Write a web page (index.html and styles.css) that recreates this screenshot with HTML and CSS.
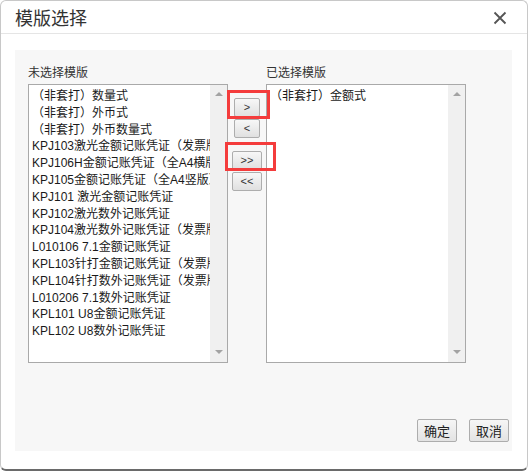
FILE: index.html
```html
<!DOCTYPE html>
<html lang="zh">
<head>
<meta charset="utf-8">
<title>模版选择</title>
<link rel="stylesheet" href="styles.css">
</head>
<body>
<div class="dialog">
  <div class="header">
    <span class="title">模版选择</span>
    <svg class="close" width="14" height="14" viewBox="0 0 14 14"><path d="M1.5 1.5 L12.5 12.5 M12.5 1.5 L1.5 12.5" stroke="#555" stroke-width="1.8" fill="none"/></svg>
  </div>
  <div class="panel">
    <div class="cols">
      <div class="col">
        <div class="label">未选择模版</div>
        <div class="listbox">
          <ul class="items">
            <li>（非套打）数量式</li>
            <li>（非套打）外币式</li>
            <li>（非套打）外币数量式</li>
            <li>KPJ103激光金额记账凭证（发票版）</li>
            <li>KPJ106H金额记账凭证（全A4横版）</li>
            <li>KPJ105金额记账凭证（全A4竖版）</li>
            <li>KPJ101 激光金额记账凭证</li>
            <li>KPJ102激光数外记账凭证</li>
            <li>KPJ104激光数外记账凭证（发票版）</li>
            <li>L010106 7.1金额记账凭证</li>
            <li>KPL103针打金额记账凭证（发票版）</li>
            <li>KPL104针打数外记账凭证（发票版）</li>
            <li>L010206 7.1数外记账凭证</li>
            <li>KPL101 U8金额记账凭证</li>
            <li>KPL102 U8数外记账凭证</li>
          </ul>
          <div class="sbar"><span class="up"></span><span class="down"></span></div>
        </div>
      </div>
      <div class="mid">
        <div class="pair">
          <button class="mv single">&gt;</button>
          <button class="mv single">&lt;</button>
        </div>
        <div class="pair">
          <button class="mv double">&gt;&gt;</button>
          <button class="mv double">&lt;&lt;</button>
        </div>
      </div>
      <div class="col">
        <div class="label">已选择模版</div>
        <div class="listbox">
          <ul class="items">
            <li>（非套打）金额式</li>
          </ul>
          <div class="sbar"><span class="up"></span><span class="down"></span></div>
        </div>
      </div>
    </div>
    <div class="footer">
      <button class="act">确定</button>
      <button class="act">取消</button>
    </div>
  </div>
  <div class="mark mark1"></div>
  <div class="mark mark2"></div>
</div>
</body>
</html>
```

FILE: styles.css
```css
html, body {
  margin: 0;
  padding: 0;
  background: #ffffff;
}
body {
  font-family: "Liberation Sans", "Noto Sans CJK SC", sans-serif;
  color: #222;
}
.dialog {
  position: relative;
  width: 528px;
  height: 471px;
  box-sizing: border-box;
  background: #fff;
  border: 1px solid #c8c8c8;
  border-bottom: 2px solid #6a6a6a;
  border-radius: 6px;
  display: flex;
  flex-direction: column;
}
.header {
  height: 32px;
  border-bottom: 1px solid #e5e5e5;
  display: flex;
  align-items: center;
  justify-content: space-between;
  padding: 0 20px 0 14px;
}
.title {
  font-family: "Noto Sans CJK SC", sans-serif;
  font-size: 18px;
  color: #333;
  line-height: 20px;
}
.close {
  display: block;
  margin-top: 1px;
}
.panel {
  margin: 16px 15px 0 14px;
  height: 401px;
  background: #f7f7f7;
  box-sizing: border-box;
  padding: 12px 3px 9px 13px;
  display: flex;
  flex-direction: column;
}
.cols {
  display: flex;
}
.col {
  width: 200px;
}
.label {
  font-family: "Noto Sans CJK SC", sans-serif;
  font-size: 12px;
  line-height: 20px;
  color: #333;
  margin-bottom: 2px;
}
.listbox {
  height: 279px;
  box-sizing: border-box;
  border: 1px solid #a9a9a9;
  background: #fff;
  display: flex;
  overflow: hidden;
}
.items {
  list-style: none;
  margin: 0;
  padding: 3px 0 0 3px;
  flex: 1;
  min-width: 0;
  overflow: hidden;
}
.items li {
  font-size: 12px;
  line-height: 16.8px;
  white-space: nowrap;
  overflow: hidden;
  color: #1a1a1a;
}
.sbar {
  width: 17px;
  flex: none;
  background: #f0f0f0;
  display: flex;
  flex-direction: column;
  justify-content: space-between;
  align-items: center;
  padding: 7px 0 8px;
}
.up, .down {
  width: 0;
  height: 0;
  border-left: 4px solid transparent;
  border-right: 4px solid transparent;
}
.up {
  border-bottom: 4px solid #a3a3a3;
}
.down {
  border-top: 4px solid #a3a3a3;
}
.mid {
  width: 38px;
  display: flex;
  flex-direction: column;
  align-items: center;
  padding-top: 36px;
  gap: 13px;
}
.pair {
  display: flex;
  flex-direction: column;
  align-items: center;
  gap: 2px;
}
.mv {
  height: 19px;
  padding: 0;
  border: 1px solid #adadad;
  border-radius: 2px;
  background: linear-gradient(#f7f7f7, #e0e0e0);
  font-family: "Liberation Sans", sans-serif;
  font-size: 11px;
  color: #333;
  line-height: 17px;
}
.single {
  width: 26px;
}
.double {
  width: 30px;
}
.footer {
  margin-top: auto;
  display: flex;
  justify-content: flex-end;
  gap: 12px;
}
.act {
  width: 40px;
  height: 23px;
  padding: 0;
  border: 1px solid #adadad;
  border-radius: 2px;
  background: linear-gradient(#f6f6f6, #e3e3e3);
  font-family: "Noto Sans CJK SC", sans-serif;
  font-size: 13px;
  line-height: 20px;
  color: #222;
}
.mark {
  position: absolute;
  border: 3px solid #f43c3c;
  box-sizing: border-box;
}
.mark1 {
  left: 226px;
  top: 89px;
  width: 43px;
  height: 29px;
}
.mark2 {
  left: 224px;
  top: 141px;
  width: 51px;
  height: 29px;
}
```
